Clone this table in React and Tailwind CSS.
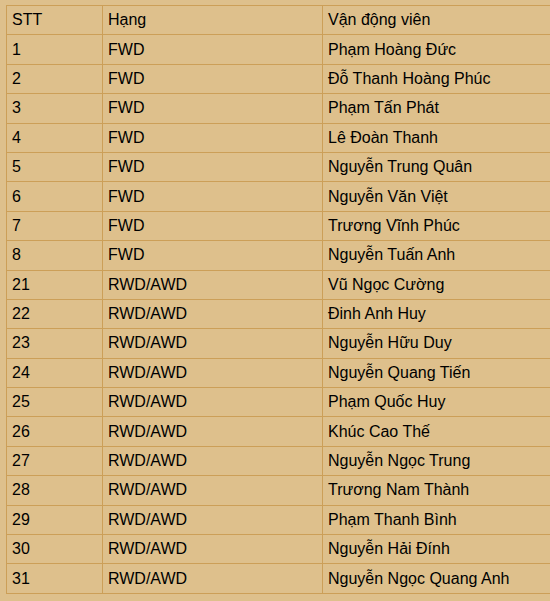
const rows = [
  ["1", "FWD", "Phạm Hoàng Đức"],
  ["2", "FWD", "Đỗ Thanh Hoàng Phúc"],
  ["3", "FWD", "Phạm Tấn Phát"],
  ["4", "FWD", "Lê Đoàn Thanh"],
  ["5", "FWD", "Nguyễn Trung Quân"],
  ["6", "FWD", "Nguyễn Văn Việt"],
  ["7", "FWD", "Trương Vĩnh Phúc"],
  ["8", "FWD", "Nguyễn Tuấn Anh"],
  ["21", "RWD/AWD", "Vũ Ngọc Cường"],
  ["22", "RWD/AWD", "Đinh Anh Huy"],
  ["23", "RWD/AWD", "Nguyễn Hữu Duy"],
  ["24", "RWD/AWD", "Nguyễn Quang Tiến"],
  ["25", "RWD/AWD", "Phạm Quốc Huy"],
  ["26", "RWD/AWD", "Khúc Cao Thế"],
  ["27", "RWD/AWD", "Nguyễn Ngọc Trung"],
  ["28", "RWD/AWD", "Trương Nam Thành"],
  ["29", "RWD/AWD", "Phạm Thanh Bình"],
  ["30", "RWD/AWD", "Nguyễn Hải Đính"],
  ["31", "RWD/AWD", "Nguyễn Ngọc Quang Anh"],
];

const cell = "border border-[#cc9f58] px-[5px] h-[29.4px] p-0 align-middle font-normal text-left";

export default function App() {
  return (
    <div className="min-h-[601px] w-[550px] overflow-hidden bg-[#dec08c] pt-[5px] pl-[6px] text-[16px] text-black font-['Liberation_Sans',Arial,sans-serif]">
      <table className="border-collapse w-[580px] table-fixed">
        <colgroup>
          <col className="w-[96px]" />
          <col className="w-[220px]" />
          <col />
        </colgroup>
        <thead>
          <tr>
            <th className={cell}>STT</th>
            <th className={cell}>Hạng</th>
            <th className={cell}>Vận động viên</th>
          </tr>
        </thead>
        <tbody>
          {rows.map((r) => (
            <tr key={r[0]}>
              <td className={cell}>{r[0]}</td>
              <td className={cell}>{r[1]}</td>
              <td className={cell}>{r[2]}</td>
            </tr>
          ))}
        </tbody>
      </table>
    </div>
  );
}
